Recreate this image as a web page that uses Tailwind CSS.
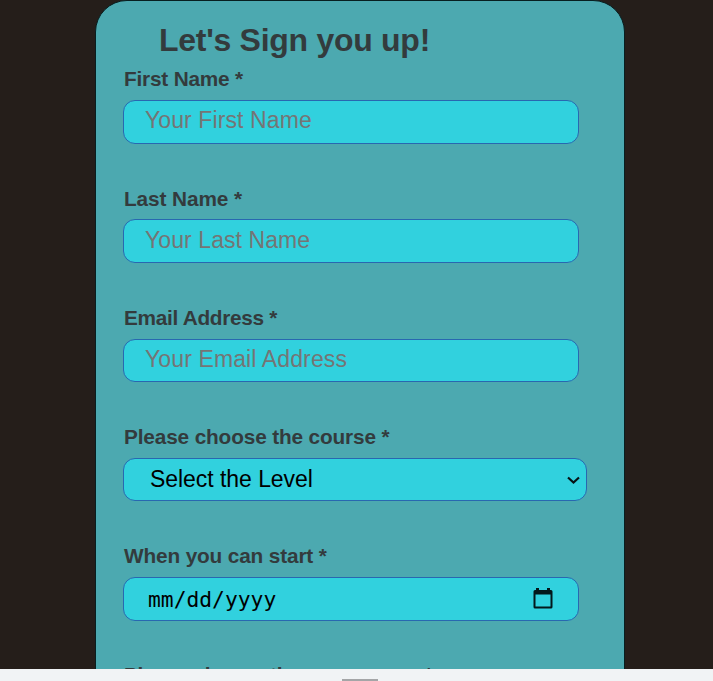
<!DOCTYPE html>
<html lang="en">
<head>
<meta charset="utf-8">
<title>Sign up</title>
<script src="https://cdn.jsdelivr.net/npm/@tailwindcss/browser@4"></script>
</head>
<body class="flex h-[681px] w-[713px] flex-col overflow-hidden bg-[#251e1a] font-['Liberation_Sans',Arial,sans-serif] text-[#333b3d]">
<main class="h-[669px] shrink-0 overflow-hidden pl-[95px]">
  <form class="h-[760px] w-[530px] rounded-[32px] border border-[#071f20] bg-[#4ca9b0] pl-[27px]">
    <h1 class="h-[66px] pl-[36px] pt-[21px] text-[32px] leading-[36px] font-bold tracking-[-0.28px] whitespace-nowrap">Let's Sign you up!</h1>
    <div class="h-[119px]">
      <label for="first" class="block h-[33px] pl-px text-[20.8px] leading-[24px] font-bold tracking-[-0.2px]">First Name *</label>
      <input id="first" placeholder="Your First Name" class="block h-[44px] w-[456px] rounded-[12px] border border-[#2868b0] bg-[#31d1de] pl-[21px] pb-[4px] text-[23px] tracking-[0.1px] text-black placeholder:text-[#757575] placeholder:opacity-100">
    </div>
    <div class="h-[120px] pt-px">
      <label for="last" class="block h-[32px] pl-px text-[20.8px] leading-[24px] font-bold tracking-[-0.1px]">Last Name *</label>
      <input id="last" placeholder="Your Last Name" class="block h-[44px] w-[456px] rounded-[12px] border border-[#2868b0] bg-[#31d1de] pl-[21px] pb-px text-[23px] tracking-[0.08px] text-black placeholder:text-[#757575] placeholder:opacity-100">
    </div>
    <div class="h-[119px]">
      <label for="email" class="block h-[33px] pl-px text-[20.8px] leading-[24px] font-bold tracking-[-0.3px]">Email Address *</label>
      <input id="email" placeholder="Your Email Address" class="block h-[43px] w-[456px] rounded-[12px] border border-[#2868b0] bg-[#31d1de] pl-[21px] pb-[3px] text-[23px] tracking-[0.12px] text-black placeholder:text-[#757575] placeholder:opacity-100">
    </div>
    <div class="h-[119px]">
      <span class="block h-[33px] pl-px text-[20.8px] leading-[24px] font-bold tracking-[-0.15px]">Please choose the course *</span>
      <div class="flex h-[43px] w-[464px] items-center justify-between rounded-[12px] border border-[#2868b0] bg-[#31d1de] pl-[26px] pr-[6px] pb-px text-[23px] text-black">
        <span class="tracking-[-0.05px]">Select the Level</span>
        <svg class="mt-[2px] h-[8px] w-[13px]" viewBox="0 0 13 8" fill="none" stroke="#071315" stroke-width="2.2"><path d="M1 1.500 6.500 6.500 12 1.500"/></svg>
      </div>
    </div>
    <div class="h-[119px]">
      <span class="block h-[33px] pl-px text-[20.8px] leading-[24px] font-bold tracking-[-0.15px]">When you can start *</span>
      <div class="flex h-[44px] w-[456px] items-center justify-between rounded-[12px] border border-[#2868b0] bg-[#31d1de] pl-[24px] pr-[25px] text-black">
        <span class="pt-[2px] font-['DejaVu_Sans_Mono',monospace] text-[21.3px]">mm/dd/yyyy</span>
        <svg class="mb-[2px] h-[21px] w-[20px]" viewBox="0 0 20 21" fill="#03191c"><path fill-rule="evenodd" d="M3 0h3v2h8V0h3v2h1a1.5 1.5 0 0 1 1.500 1.500V19a1.500 1.500 0 0 1-1.500 1.500H2A1.500 1.500 0 0 1 .5 19V3.500A1.500 1.500 0 0 1 2 2h1zM2.500 6.500v12h15v-12z"/></svg>
      </div>
    </div>
    <span class="block pl-px text-[20.8px] leading-[24px] font-bold tracking-[-0.3px]">Please choose the course area *</span>
  </form>
</main>
<footer class="flex h-[12px] shrink-0 items-end bg-[#f1f3f5] pl-[342px]"><div class="h-[2px] w-[36px] bg-[#a4a5a7]"></div></footer>
</body>
</html>
